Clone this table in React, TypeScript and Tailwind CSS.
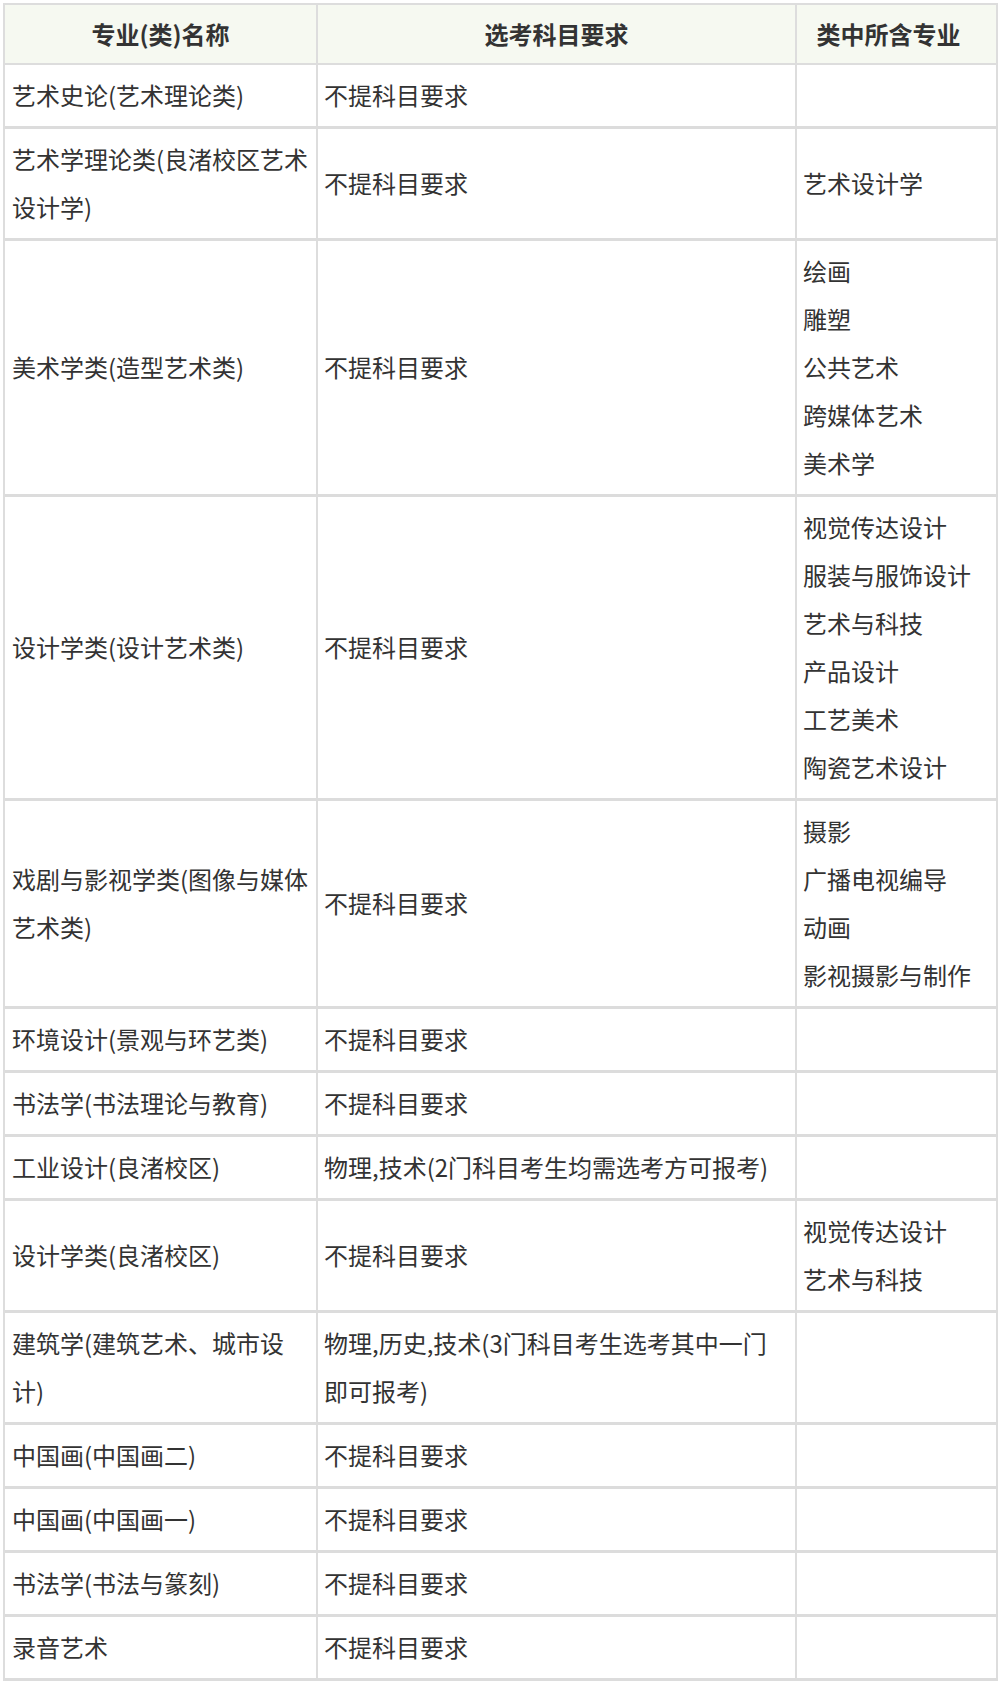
import React from "react";

type Row = { name: React.ReactNode; req: React.ReactNode; majors: string[] };

const NO = "不提科目要求";

const rows: Row[] = [
  { name: "艺术史论(艺术理论类)", req: NO, majors: [] },
  {
    name: (
      <>
        艺术学理论类(良渚校区艺术
        <br />
        设计学)
      </>
    ),
    req: NO,
    majors: ["艺术设计学"],
  },
  { name: "美术学类(造型艺术类)", req: NO, majors: ["绘画", "雕塑", "公共艺术", "跨媒体艺术", "美术学"] },
  {
    name: "设计学类(设计艺术类)",
    req: NO,
    majors: ["视觉传达设计", "服装与服饰设计", "艺术与科技", "产品设计", "工艺美术", "陶瓷艺术设计"],
  },
  {
    name: (
      <>
        戏剧与影视学类(图像与媒体
        <br />
        艺术类)
      </>
    ),
    req: NO,
    majors: ["摄影", "广播电视编导", "动画", "影视摄影与制作"],
  },
  { name: "环境设计(景观与环艺类)", req: NO, majors: [] },
  { name: "书法学(书法理论与教育)", req: NO, majors: [] },
  { name: "工业设计(良渚校区)", req: "物理,技术(2门科目考生均需选考方可报考)", majors: [] },
  { name: "设计学类(良渚校区)", req: NO, majors: ["视觉传达设计", "艺术与科技"] },
  {
    name: (
      <>
        建筑学(建筑艺术、城市设
        <br />
        计)
      </>
    ),
    req: (
      <>
        物理,历史,技术(3门科目考生选考其中一门
        <br />
        即可报考)
      </>
    ),
    majors: [],
  },
  { name: "中国画(中国画二)", req: NO, majors: [] },
  { name: "中国画(中国画一)", req: NO, majors: [] },
  { name: "书法学(书法与篆刻)", req: NO, majors: [] },
  { name: "录音艺术", req: NO, majors: [] },
];

export default function App() {
  return (
    <div
      className="min-h-[1687px] w-[1001px] bg-white pt-[3px] pl-[3px] text-[24px] leading-[48px] text-[#333333]"
      style={{ fontFamily: '"Noto Sans CJK SC", "Noto Sans", sans-serif' }}
    >
      <div className="w-[995px] border-l-2 border-t-2 border-[#dddddd]">
        {/* header */}
        <div className="flex border-b-2 border-[#dddddd] bg-[#f6f9f1] font-bold">
          <div className="flex h-[58px] w-[313px] items-center justify-center border-r-2 border-[#dddddd]">
            专业(类)名称
          </div>
          <div className="flex h-[58px] w-[479px] items-center justify-center border-r-2 border-[#dddddd]">
            选考科目要求
          </div>
          <div className="flex h-[58px] w-[201px] items-center justify-center border-r-2 border-[#dddddd] pr-[16px]">
            类中所含专业
          </div>
        </div>
        {rows.map((r, i) => (
          <div key={i} className="flex border-b-[3px] border-[#dcdcdc]">
            <div className="flex w-[313px] items-center border-r-2 border-[#dddddd] pt-[6px] pb-[7px] pl-[7px]">
              <div>{r.name}</div>
            </div>
            <div className="flex w-[479px] items-center border-r-2 border-[#dddddd] pt-[6px] pb-[7px] pl-[6px]">
              <div>{r.req}</div>
            </div>
            <div className="flex w-[201px] items-center border-r-2 border-[#dddddd] pt-[6px] pb-[7px] pl-[6px]">
              <div className="flex flex-col">
                {r.majors.length === 0 ? <span>&nbsp;</span> : r.majors.map((m) => <span key={m}>{m}</span>)}
              </div>
            </div>
          </div>
        ))}
      </div>
    </div>
  );
}
